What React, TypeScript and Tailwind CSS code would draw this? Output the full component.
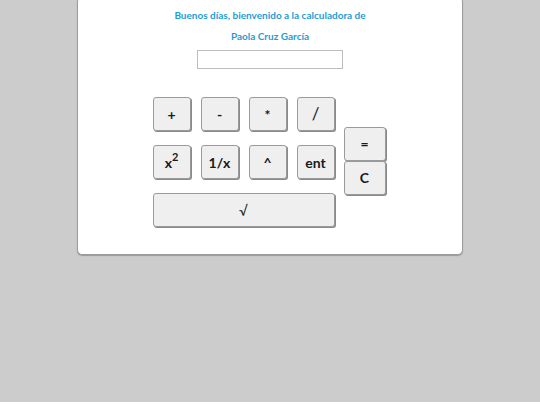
import React from 'react';

const ops = ['+', '-', '*', '/'];

function Key({ children, className = '' }: { children: React.ReactNode; className?: string }) {
  return (
    <button
      className={`flex items-center justify-center h-[34px] rounded-[3px] border border-[#9a9a9a] bg-[#efefef] text-[#1a1a1a] font-bold text-[14px] shadow-[1px_1px_0_#8a8a8a] ${className}`}
    >
      {children}
    </button>
  );
}

export default function App() {
  return (
    <div className="min-h-[405px] bg-[#cccccc] font-['Lato','Liberation_Sans',sans-serif]">
      <div className="mx-auto -mt-[3px] w-[386px] h-[258px] rounded-[5px] border border-[#9c9c9c] bg-white shadow-[0_1px_1px_rgba(0,0,0,0.25)]">
        {/* Greeting */}
        <div className="pt-[11px] text-center text-[10px] font-bold text-[#1f9dd3] leading-[13px]">
          <p>Buenos días, bienvenido a la calculadora de</p>
          <p className="mt-[8px]">Paola Cruz García</p>
        </div>

        <div className="mt-[7px] flex justify-center">
          <input className="w-[146px] h-[19px] border border-[#bdbdbd] bg-white outline-none" />
        </div>

        {/* Keypad */}
        <div className="mt-[28px] flex items-center justify-center gap-[9px] pr-[2px]">
          <div className="grid grid-cols-4 gap-x-[10px] gap-y-[14px] w-[182px]">
            {ops.map((o) => (
              <Key key={o} className={o === '/' ? 'text-[17px] font-normal' : ''}>
                {o}
              </Key>
            ))}
            <Key>
              x<sup className="text-[11px] -top-[5px]">2</sup>
            </Key>
            <Key>1/x</Key>
            <Key>^</Key>
            <Key>ent</Key>
            <Key className="col-span-4 font-normal">√</Key>
          </div>
          <div className="flex flex-col w-[42px] -mt-[3px]">
            <Key>=</Key>
            <Key>C</Key>
          </div>
        </div>
      </div>
    </div>
  );
}
